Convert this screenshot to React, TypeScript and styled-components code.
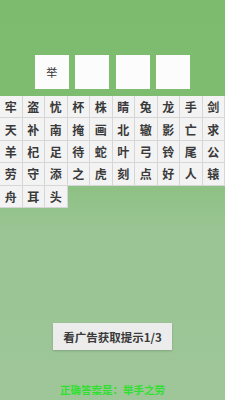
import React from "react";
import styled, { createGlobalStyle } from "styled-components";

const GlobalStyle = createGlobalStyle`
  html, body {
    margin: 0;
    padding: 0;
  }
  body {
    font-family: "Noto Sans CJK SC", "Noto Sans", sans-serif;
  }
`;

const Screen = styled.div`
  width: 225px;
  height: 400px;
  overflow: hidden;
  display: flex;
  flex-direction: column;
  align-items: center;
  background: linear-gradient(
    to bottom,
    #7dbb6e 0%,
    #7ebc70 26%,
    #8cc082 45%,
    #9bc594 58%,
    #9ec699 100%
  );
`;

const AnswerRow = styled.div`
  display: flex;
  gap: 6.5px;
  margin-top: 55px;
`;

const AnswerBox = styled.div`
  width: 34px;
  height: 34px;
  background: #fcfcfc;
  display: flex;
  align-items: center;
  justify-content: center;
  font-size: 11px;
  color: #333;
`;

const Grid = styled.div`
  margin-top: 7px;
  width: 225px;
  display: grid;
  grid-template-columns: repeat(10, 22.5px);
  grid-auto-rows: 22.4px;
`;

const Cell = styled.div`
  box-sizing: border-box;
  background: #f3f3f3;
  border: 1px solid #d6d6d6;
  border-width: 0 1px 1px 0;
  display: flex;
  align-items: center;
  justify-content: center;
  font-size: 12px;
  font-weight: 700;
  color: #3a3a3a;
`;

const HintButton = styled.div`
  margin-top: auto;
  width: 119px;
  height: 27px;
  background: #ececec;
  box-shadow: 0 1px 2px rgba(0, 0, 0, 0.18);
  display: flex;
  align-items: center;
  justify-content: center;
  font-size: 11.5px;
  font-weight: 700;
  color: #3a3a3a;
`;

const AnswerText = styled.div`
  margin-top: 33px;
  margin-bottom: 3px;
  font-size: 10.5px;
  font-weight: 700;
  color: #2fe02f;
  line-height: 14px;
`;

const chars =
  "牢盗忧杯株睛兔龙手剑天补南掩画北辙影亡求羊杞足待蛇叶弓铃尾公劳守添之虎刻点好人辕舟耳头";

const answer = ["举", "", "", ""];

export default function App() {
  return (
    <>
      <GlobalStyle />
      <Screen>
        <AnswerRow>
          {answer.map((c, i) => (
            <AnswerBox key={i}>{c}</AnswerBox>
          ))}
        </AnswerRow>
        <Grid>
          {Array.from(chars).map((c, i) => (
            <Cell key={i}>{c}</Cell>
          ))}
        </Grid>
        <HintButton>看广告获取提示1/3</HintButton>
        <AnswerText>正确答案是：举手之劳</AnswerText>
      </Screen>
    </>
  );
}
